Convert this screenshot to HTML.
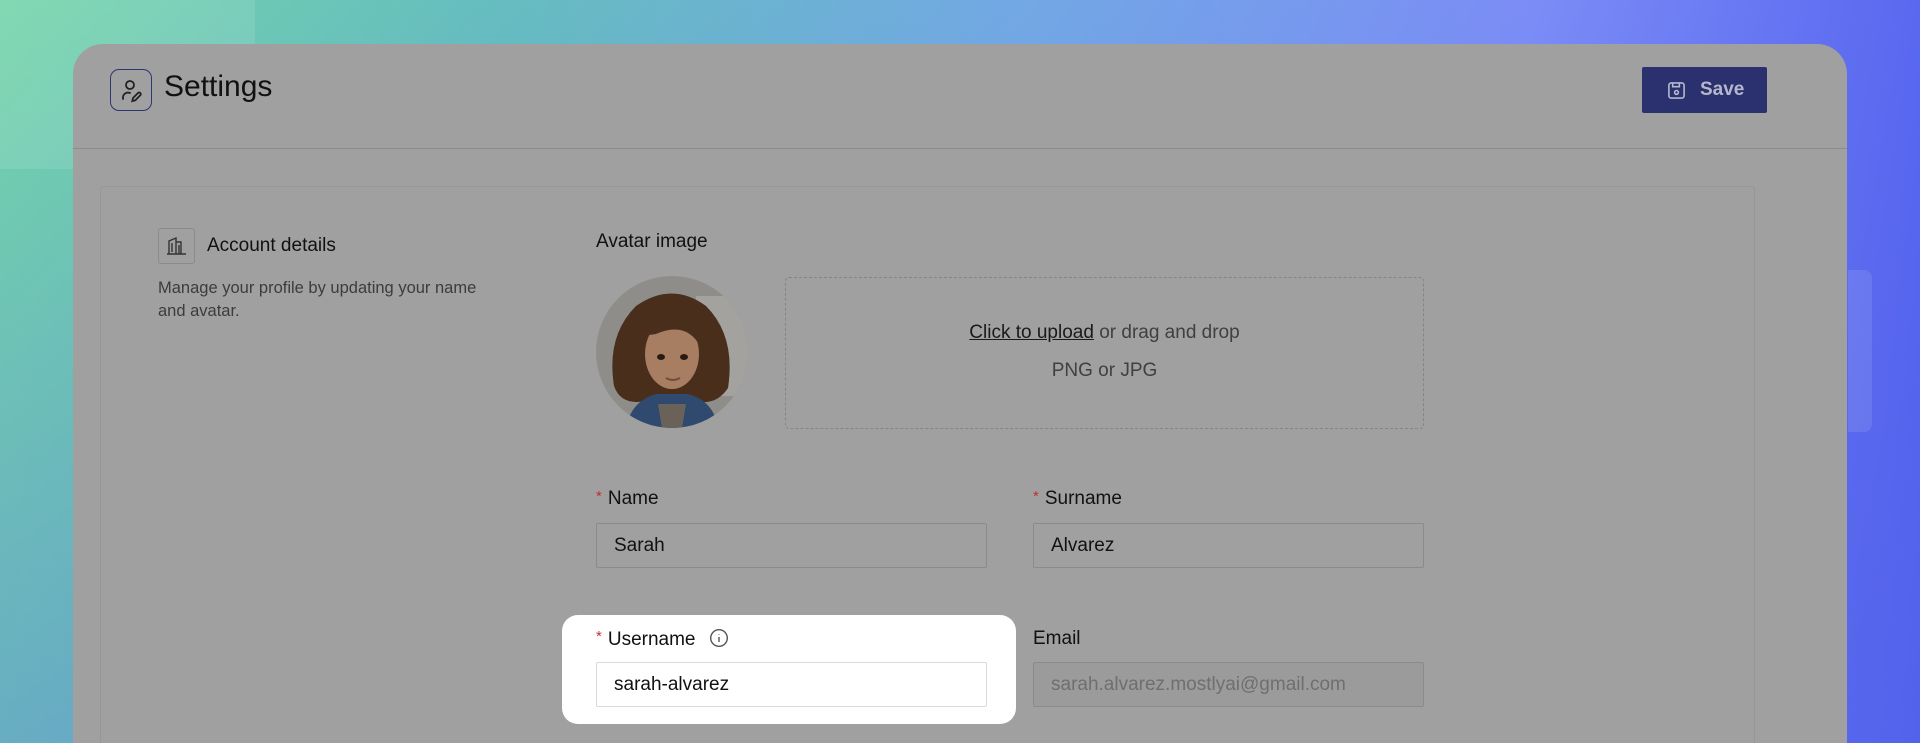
<!DOCTYPE html>
<html style="width:1920px;height:743px;overflow:hidden"><head><meta charset="utf-8"><style>
*{box-sizing:border-box;margin:0;padding:0}
body{width:1920px;height:743px;overflow:hidden;position:relative;font-family:"Liberation Sans",Arial,sans-serif;
background:linear-gradient(180deg,rgba(90,100,230,0) 0%,rgba(90,110,230,.35) 100%),linear-gradient(100deg,#73d5a9 0%,#66bcc0 25%,#72a8e4 50%,#7b8cf6 75%,#4e5cee 100%);}
.tl{position:absolute;left:0;top:0;width:255px;height:169px;background:rgba(255,255,255,.1)}
.rr{position:absolute;left:1848px;top:270px;width:24px;height:162px;background:rgba(255,255,255,.1);border-radius:0 8px 8px 0}
.card{position:absolute;left:73px;top:44px;width:1774px;height:699px;background:#a0a0a0;border-radius:30px 30px 0 0;overflow:hidden}
.hdr{position:absolute;left:0;top:0;width:100%;height:105px;border-bottom:1px solid #8c8c8c}
.sicon{position:absolute;left:37px;top:25px;width:42px;height:42px;border:1.5px solid #2e3575;border-radius:9px}
.title{position:absolute;left:91px;top:26px;font-size:30px;color:#111}
.save{position:absolute;left:1569px;top:23px;width:125px;height:46px;background:#2b316f;border-radius:2px;color:#b5b8cc;font-weight:bold;font-size:19px}
.panel{position:absolute;left:27px;top:142px;width:1655px;height:557px;border:1px solid #979797;border-bottom:none;border-radius:4px 4px 0 0}
.t{position:absolute;color:#111;white-space:nowrap}
.ai{position:absolute;left:158px;top:228px;width:37px;height:36px;border:1px solid #8a8a8a;border-radius:3px}
.drop{position:absolute;left:785px;top:277px;width:639px;height:152px;border:1.5px dashed #858585;border-radius:4px;text-align:center;color:#404040;font-size:19px}
.in{position:absolute;height:45px;border:1px solid #8b8b8b;border-radius:2px;font-size:19px;color:#111;padding-left:17px;line-height:43px}
.hl{position:absolute;left:562px;top:615px;width:454px;height:109px;background:#fff;border-radius:16px}
.star{color:#c0302e;font-size:15px;vertical-align:top;margin-right:6px}
</style></head><body>
<div class="tl"></div><div class="rr"></div>
<div class="card">
 <div class="hdr">
  <div class="sicon"><svg width="40" height="40" viewBox="0 0 40 40" fill="none" stroke="#222" stroke-width="1.8" stroke-linecap="round"><circle cx="19" cy="15" r="4"/><path d="M12 29v-2a5 5 0 0 1 7-4"/><path d="M22 28l5-5a1.6 1.6 0 0 1 2.3 2.3l-5 5-3 .8z"/></svg></div>
  <div class="title">Settings</div>
  <div class="save"><svg style="position:absolute;left:25px;top:14px" width="19" height="19" viewBox="0 0 20 20" fill="none" stroke="#b5b8cc" stroke-width="1.7"><rect x="2" y="2" width="16" height="16" rx="2.5"/><path d="M6 2v4h7V2"/><circle cx="10" cy="12" r="2"/></svg><span style="position:absolute;left:58px;top:12px">Save</span></div>
 </div>
 <div class="panel"></div>
</div>
<div class="ai"><svg width="35" height="34" viewBox="0 0 35 34" fill="none" stroke="#333" stroke-width="1.4"><path d="M10 25V12l7-3v16M17 13h5v12M8 25h19M13 14v9M20 16v9"/></svg></div>
<div class="t" style="left:207px;top:235px;font-size:19px">Account details</div>
<div class="t" style="left:158px;top:277px;font-size:16.5px;color:#3c3c3c;line-height:23px">Manage your profile by updating your name<br>and avatar.</div>
<div class="t" style="left:596px;top:231px;font-size:19px">Avatar image</div>
<svg style="position:absolute;left:596px;top:276px" width="152" height="152" viewBox="0 0 152 152">
<defs><clipPath id="c"><circle cx="76" cy="76" r="76"/></clipPath></defs>
<g clip-path="url(#c)">
<rect width="152" height="152" fill="#8e8d89"/>
<rect x="100" y="20" width="52" height="100" fill="#a3a29e"/>
<path d="M18 110 Q10 60 40 30 Q76 5 110 30 Q140 60 132 112 Q120 130 100 125 L50 125 Q25 130 18 110Z" fill="#4a2e1c"/>
<path d="M30 152 Q35 125 60 118 L92 118 Q118 125 122 152Z" fill="#2f4a6e"/>
<path d="M62 128 L90 128 L86 152 L66 152Z" fill="#6a6258"/>
<ellipse cx="76" cy="78" rx="27" ry="35" fill="#a77e62"/>
<path d="M46 60 Q60 30 95 38 Q108 52 104 70 Q90 45 60 58Z" fill="#4a2e1c"/>
<ellipse cx="65" cy="81" rx="4" ry="3" fill="#2a1a12"/><ellipse cx="88" cy="81" rx="4" ry="3" fill="#2a1a12"/>
<path d="M70 102 Q77 106 84 102" stroke="#7a4a3c" stroke-width="2" fill="none"/>
</g></svg>
<div class="drop"><div style="margin-top:44px"><span style="text-decoration:underline;color:#1a1a1a">Click to upload</span> or drag and drop</div><div style="margin-top:16px">PNG or JPG</div></div>
<div class="t" style="left:596px;top:488px;font-size:19px"><span class="star">*</span>Name</div>
<div class="t" style="left:1033px;top:488px;font-size:19px"><span class="star">*</span>Surname</div>
<div class="in" style="left:596px;top:523px;width:391px">Sarah</div>
<div class="in" style="left:1033px;top:523px;width:391px">Alvarez</div>
<div class="hl"></div>
<div class="t" style="left:596px;top:628px;font-size:19px"><span class="star">*</span>Username <svg style="vertical-align:-3px;margin-left:8px" width="20" height="20" viewBox="0 0 20 20" fill="none" stroke="#555" stroke-width="1.4"><circle cx="10" cy="10" r="8.3"/><path d="M10 9v5M10 6v.5"/></svg></div>
<div class="t" style="left:1033px;top:628px;font-size:19px">Email</div>
<div class="in" style="left:596px;top:662px;width:391px;background:#fff;border-color:#d9d9d9">sarah-alvarez</div>
<div class="in" style="left:1033px;top:662px;width:391px;color:#6f6f6f;background:#9b9b9b">sarah.alvarez.mostlyai@gmail.com</div>
</body></html>
